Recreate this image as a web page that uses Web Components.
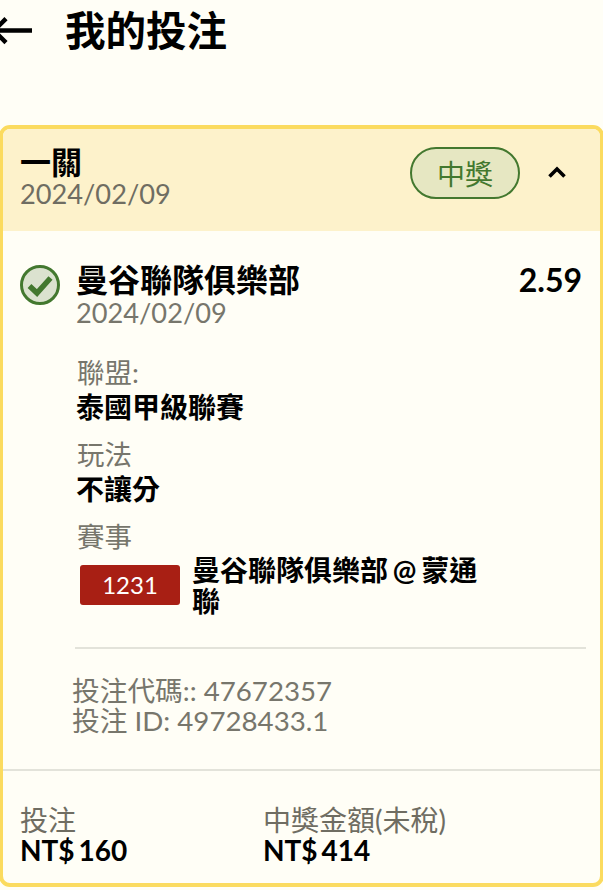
<!DOCTYPE html>
<html lang="zh-Hant">
<head>
<meta charset="utf-8">
<title>我的投注</title>
<style>
    html, body {
        margin: 0;
        padding: 0;
        background: #fffef6;
    }
    body {
        width: 603px;
        height: 890px;
        overflow: hidden;
        font-family: Lato, "Noto Sans CJK TC", sans-serif;
        color: #000;
    }
</style>
</head>
<body>
<top-bar>我的投注</top-bar>
<bet-card title="一關" date="2024/02/09" status="中獎" stake="NT$ 160" payout="NT$ 414">
    <bet-leg team="曼谷聯隊俱樂部" date="2024/02/09" odds="2.59" code="47672357" bet-id="49728433.1">
        <info-field label="聯盟:">泰國甲級聯賽</info-field>
        <info-field label="玩法">不讓分</info-field>
        <info-field label="賽事">
            <match-line number="1231">曼谷聯隊俱樂部 @ 蒙通聯</match-line>
        </info-field>
    </bet-leg>
</bet-card>

<script>
class TopBar extends HTMLElement {
    constructor () {
        super();
        this.attachShadow({mode: "open"});
    }

    connectedCallback () {
        this.shadowRoot.innerHTML = `
        <style>
            :host {
                display: flex;
                align-items: center;
                height: 125px;
                padding-bottom: 63px;
                box-sizing: border-box;
                overflow: hidden;
            }
            svg {
                flex: none;
                margin-left: -10px;
                margin-right: 33px;
            }
            h1 {
                margin: 0;
                font-size: 40.5px;
                font-weight: 700;
                line-height: 1;
            }
        </style>
        <svg width="42" height="30" viewBox="0 0 42 30" fill="none" stroke="#000" stroke-width="4.5">
            <path d="M42 14.6H4M16 2.6L4 14.6l12 12"/>
        </svg>
        <h1><slot></slot></h1>
        `;
    }
}

class StatusPill extends HTMLElement {
    constructor () {
        super();
        this.attachShadow({mode: "open"});
    }

    connectedCallback () {
        this.shadowRoot.innerHTML = `
        <style>
            :host {
                display: flex;
                align-items: center;
                justify-content: center;
                box-sizing: border-box;
                width: 110px;
                height: 52px;
                border: 2px solid #43782f;
                border-radius: 26px;
                background: #e6e7c2;
                color: #43782f;
                font-size: 28px;
            }
        </style>
        <slot></slot>
        `;
    }
}

class BetCard extends HTMLElement {
    constructor () {
        super();
        this.attachShadow({mode: "open"});
    }

    connectedCallback () {
        let title = this.getAttribute("title");
        let date = this.getAttribute("date");
        let status = this.getAttribute("status");
        let stake = this.getAttribute("stake");
        let payout = this.getAttribute("payout");

        this.shadowRoot.innerHTML = `
        <style>
            :host {
                display: block;
                box-sizing: border-box;
                height: 762px;
                margin: 0 -1px;
                border: 4px solid #fbdb5f;
                border-radius: 11px;
                overflow: hidden;
            }
            header {
                display: flex;
                align-items: flex-start;
                box-sizing: border-box;
                height: 102px;
                padding: 16px 33px 0 17px;
                background: #fdf2cb;
            }
            .heading {
                flex: 1;
            }
            .title {
                font-size: 31px;
                font-weight: 700;
                line-height: 34px;
            }
            .date {
                font-size: 27.2px;
                line-height: 30px;
                color: #6f6d62;
            }
            .actions {
                display: flex;
                align-items: center;
                gap: 27px;
                margin-top: 2px;
            }
            svg {
                margin-bottom: 2px;
            }
            footer {
                display: grid;
                grid-template-columns: 243px 1fr;
                height: 114px;
                padding: 35px 17px 0;
                box-sizing: border-box;
                border-top: 2px solid #e3e3da;
            }
            .label {
                font-size: 28px;
                line-height: 29px;
                color: #6f6d62;
            }
            .amount {
                font-size: 28px;
                font-weight: 700;
                line-height: 30px;
                word-spacing: -3px;
            }
        </style>
        <header>
            <div class="heading">
                <div class="title">${title}</div>
                <div class="date">${date}</div>
            </div>
            <div class="actions">
                <status-pill>${status}</status-pill>
                <svg width="20" height="14" viewBox="0 0 20 14" fill="none" stroke="#000" stroke-width="3.6">
                    <path d="M2.5 11.5L10 4l7.5 7.5"/>
                </svg>
            </div>
        </header>
        <slot></slot>
        <footer>
            <div>
                <div class="label">投注</div>
                <div class="amount">${stake}</div>
            </div>
            <div>
                <div class="label">中獎金額(未稅)</div>
                <div class="amount">${payout}</div>
            </div>
        </footer>
        `;
    }
}

class BetLeg extends HTMLElement {
    constructor () {
        super();
        this.attachShadow({mode: "open"});
    }

    connectedCallback () {
        this.shadowRoot.innerHTML = `
        <style>
            :host {
                display: grid;
                grid-template-columns: 40px 1fr;
                column-gap: 16px;
                align-content: start;
                height: 538px;
                box-sizing: border-box;
                padding: 32px 14px 0 17px;
            }
            svg {
                margin-top: 2px;
            }
            .top {
                display: flex;
                justify-content: space-between;
            }
            .team {
                font-size: 32px;
                font-weight: 700;
                line-height: 34px;
            }
            .odds {
                font-size: 32px;
                font-weight: 700;
                line-height: 34px;
                padding-right: 4px;
            }
            .date {
                font-size: 27.2px;
                line-height: 32px;
                color: #77766c;
                margin-bottom: 27px;
            }
            .codes {
                grid-column: 1 / -1;
                margin: 0 0 0 55px;
                padding: 27px 0 0 0;
                border-top: 2px solid #e3e3da;
                font-size: 27.7px;
                line-height: 30px;
                color: #77766c;
            }
            .codes div {
                margin-left: -3px;
            }
            .fields {
                min-height: 291px;
            }
        </style>
        <svg width="40" height="40" viewBox="0 0 40 40">
            <circle cx="20" cy="20" r="18.5" fill="#dbe2cf" stroke="#43782f" stroke-width="3"/>
            <path d="M9.5 21l7.5 7 13.5-15" fill="none" stroke="#43782f" stroke-width="5.5"/>
        </svg>
        <div>
            <div class="top">
                <div class="team">${this.getAttribute("team")}</div>
                <div class="odds">${this.getAttribute("odds")}</div>
            </div>
            <div class="date">${this.getAttribute("date")}</div>
            <div class="fields"><slot></slot></div>
        </div>
        <div class="codes">
            <div>投注代碼:: ${this.getAttribute("code")}</div>
            <div>投注 ID: ${this.getAttribute("bet-id")}</div>
        </div>
        `;
    }
}

class InfoField extends HTMLElement {
    constructor () {
        super();
        this.attachShadow({mode: "open"});
    }

    connectedCallback () {
        this.shadowRoot.innerHTML = `
        <style>
            :host {
                display: block;
                margin-bottom: 15px;
            }
            .label {
                padding-left: 1px;
                font-size: 27.5px;
                line-height: 34px;
                color: #77766c;
            }
            .value {
                padding-top: 1px;
                font-size: 28px;
                font-weight: 700;
                line-height: 32px;
            }
        </style>
        <div class="label">${this.getAttribute("label")}</div>
        <div class="value"><slot></slot></div>
        `;
    }
}

class MatchLine extends HTMLElement {
    constructor () {
        super();
        this.attachShadow({mode: "open"});
    }

    connectedCallback () {
        this.shadowRoot.innerHTML = `
        <style>
            :host {
                display: flex;
                align-items: flex-start;
                padding: 0 0 0 4px;
                width: 404px;
            }
            .number {
                flex: none;
                width: 100px;
                height: 40px;
                margin: 10px 12px 0 0;
                border-radius: 3px;
                background: #a81f14;
                color: #fff;
                font-size: 24px;
                font-weight: 400;
                line-height: 40px;
                text-align: center;
            }
            .name {
                line-height: 31px;
                word-spacing: -2px;
            }
        </style>
        <div class="number">${this.getAttribute("number")}</div>
        <div class="name"><slot></slot></div>
        `;
    }
}

customElements.define("top-bar", TopBar);
customElements.define("status-pill", StatusPill);
customElements.define("bet-card", BetCard);
customElements.define("bet-leg", BetLeg);
customElements.define("info-field", InfoField);
customElements.define("match-line", MatchLine);
</script>
</body>
</html>
